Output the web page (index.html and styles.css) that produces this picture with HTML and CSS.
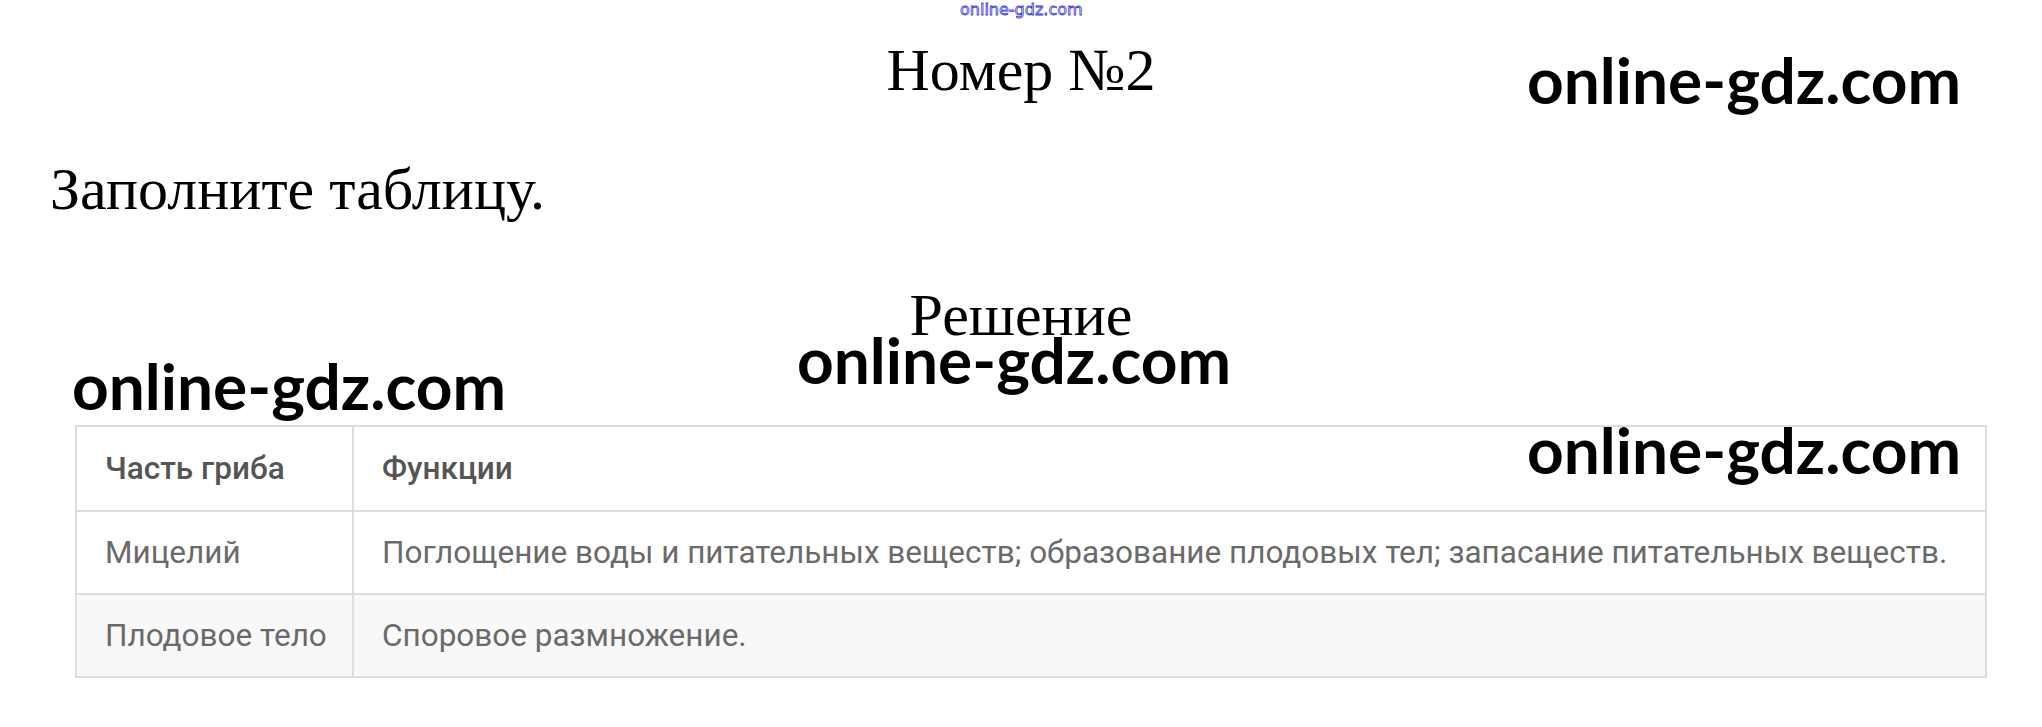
FILE: index.html
```html
<!DOCTYPE html>
<html lang="ru">
  <head>
    <meta charset="UTF-8" />
    <meta name="viewport" content="width=device-width, initial-scale=1.0" />
    <title>Номер №2</title>
    <link rel="stylesheet" href="styles.css">
  </head>
  <body>
    <div class="page">
      <div class="mark-small">online-gdz.com</div>

      <h1 class="task-title">Номер №2</h1>
      <p class="task-text">Заполните таблицу.</p>
      <h2 class="solution-title">Решение</h2>

      <table class="answer">
        <colgroup>
          <col class="part-col">
          <col>
        </colgroup>
        <thead>
          <tr>
            <th>Часть гриба</th>
            <th>Функции</th>
          </tr>
        </thead>
        <tbody>
          <tr>
            <td>Мицелий</td>
            <td>Поглощение воды и питательных веществ; образование плодовых тел; запасание питательных веществ.</td>
          </tr>
          <tr class="striped">
            <td>Плодовое тело</td>
            <td>Споровое размножение.</td>
          </tr>
        </tbody>
      </table>

      <div class="mark mark-top">online-gdz.com</div>
      <div class="mark mark-mid">online-gdz.com</div>
      <div class="mark mark-left">online-gdz.com</div>
      <div class="mark mark-table">online-gdz.com</div>
    </div>
  </body>
</html>
```

FILE: styles.css
```css
body {
  margin: 0;
  padding: 0;
  background: #fff;
  font-family: "Liberation Serif", "Times New Roman", serif;
  color: #000;
}
.page {
  position: relative;
  width: 2042px;
  height: 727px;
  padding-top: 39px;
  box-sizing: border-box;
  overflow: hidden;
}
.task-title,
.task-text,
.solution-title {
  margin: 0;
  font-size: 60px;
  font-weight: normal;
  line-height: 62px;
}
.task-title {
  text-align: center;
}
.task-text {
  margin-top: 57px;
  padding-left: 50px;
}
.solution-title {
  margin-top: 64px;
  text-align: center;
}

.answer {
  margin: 79px 0 0 75px;
  width: 1912px;
  table-layout: fixed;
  border-collapse: collapse;
  font-family: Roboto, "Liberation Sans", sans-serif;
  font-size: 31.5px;
  color: #6a6a6a;
}
.answer .part-col {
  width: 277px;
}
.answer th,
.answer td {
  border: 2px solid #ddd;
  padding: 0 0 0 28px;
  text-align: left;
  vertical-align: middle;
  white-space: nowrap;
}
.answer th {
  height: 83px;
  font-weight: 500;
  color: #555;
}
.answer td {
  height: 81px;
}
.answer .striped td {
  background: #f8f8f8;
}

.mark {
  position: absolute;
  font-family: Lato, "Open Sans", sans-serif;
  font-weight: bold;
  font-size: 64px;
  line-height: 64px;
  color: #000;
  white-space: nowrap;
}
.mark-top { left: 1527px; top: 48px; }
.mark-mid { left: 797px; top: 328px; }
.mark-left { left: 72px; top: 354px; }
.mark-table { left: 1527px; top: 418px; }

.mark-small {
  position: absolute;
  left: 960px;
  top: 0;
  font-family: "DejaVu Sans", sans-serif;
  font-size: 16px;
  line-height: 20px;
  color: #fff;
  -webkit-text-stroke: 0.8px #3a3ad6;
  white-space: nowrap;
}
```
